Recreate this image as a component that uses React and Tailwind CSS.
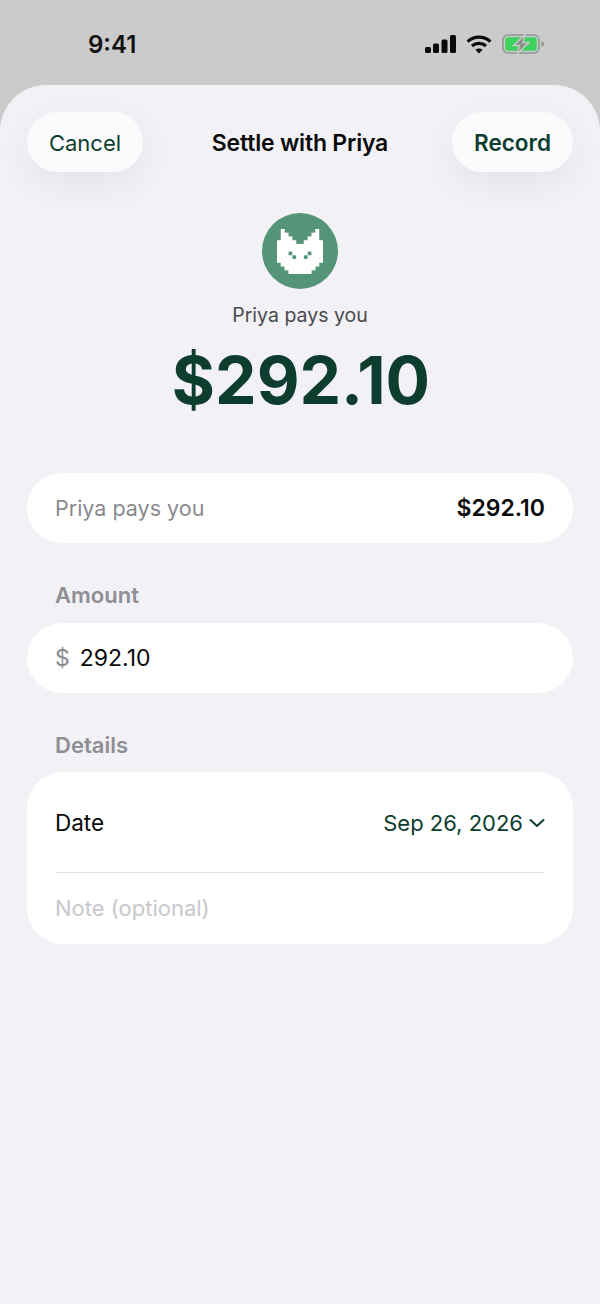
const CAT = [
  '.#........#.',
  '.##......##.',
  '.###....###.',
  '#####..#####',
  '############',
  '############',
  '###.####.###',
  '####.##.####',
  '############',
  '.##########.',
  '..########..',
  '...######...',
];

// all cells go in one path so no seams show between them
const CAT_PATH = CAT.flatMap((row, y) =>
  [...row].map((c, x) => (c === '#' ? `M${x} ${y}h1v1h-1z` : ''))
).join('');

const StatusBar = () => (
  <div className="flex h-[85px] items-start justify-between pl-[88px] pr-[55px] pt-[30px]">
    <span className="text-[24px] font-semibold leading-[30px] text-[#111]">9:41</span>
    <div className="flex items-center gap-[10px] pt-[4px]">
      <svg width="31" height="18" viewBox="0 0 31 18" fill="#0a0a0a">
        <rect x="0" y="12" width="6" height="6" rx="1.5" />
        <rect x="8" y="8.5" width="6" height="9.5" rx="1.5" />
        <rect x="16.5" y="4.5" width="6" height="13.5" rx="1.5" />
        <rect x="25" y="0" width="6" height="18" rx="1.5" />
      </svg>
      <svg width="26" height="19" viewBox="0 0 26 19" fill="none" stroke="#0a0a0a" strokeWidth="3.2">
        <path d="M1.6 6.6C8 .6 18 .6 24.4 6.6" />
        <path d="M6 11c3.8-3.4 10.2-3.4 14 0" />
        <path d="M13 18.6l-3.6-3.9c2-1.6 5.2-1.6 7.2 0z" fill="#0a0a0a" stroke="none" />
      </svg>
      <svg width="43" height="20" viewBox="0 0 43 20" fill="none">
        <rect x="1" y="1" width="36" height="18" rx="5" stroke="#8f9a90" strokeWidth="1.6" />
        <rect x="3.2" y="3.2" width="31.6" height="13.6" rx="3" fill="#3ed25f" />
        <path d="M39.5 7v6c1.6-.4 2.5-1.6 2.5-3s-.9-2.6-2.5-3z" fill="#8f9a90" />
        <path d="M23 0.5L11.5 11.5h6l-2 8L27 8.5h-6z" fill="#8a928b" stroke="#cbcbcb" strokeWidth="1.4" />
      </svg>
    </div>
  </div>
);

const Avatar = () => (
  <div className="flex h-[76px] w-[76px] items-center justify-center rounded-full bg-[#549478]">
    <svg width="46" height="45" viewBox="0 0 12 12" fill="#fff" preserveAspectRatio="none">
      <path d={CAT_PATH} stroke="#fff" strokeWidth="0.04" />
    </svg>
  </div>
);

const SectionLabel = ({ children, className }) => (
  <p className={`px-[28px] text-[22px] font-semibold leading-[28px] text-[#8e8e93] ${className}`}>{children}</p>
);

export default function App() {
  return (
    <div className="flex h-[1304px] w-[600px] flex-col overflow-hidden bg-[#cbcbcb] font-['Inter',sans-serif]">
      <StatusBar />
      <div className="flex-1 rounded-t-[46px] bg-[#f1f1f6] px-[27px] pt-[27px]">
        <div className="grid grid-cols-[1fr_auto_1fr] items-center">
          <button className="flex h-[60px] w-[116px] items-center justify-center justify-self-start rounded-full bg-[#fbfbfd] pt-[2px] text-[22px] text-[#0d3d2e] shadow-[0_12px_36px_rgba(0,0,0,0.06)]">
            Cancel
          </button>
          <span className="pt-[2px] text-[23px] font-semibold tracking-[-0.2px] text-[#0a0a0a]">Settle with Priya</span>
          <button className="flex h-[60px] w-[121px] items-center justify-center justify-self-end rounded-full bg-[#fbfbfd] pt-[2px] text-[22.5px] font-semibold text-[#0d3d2e] shadow-[0_12px_36px_rgba(0,0,0,0.06)]">
            Record
          </button>
        </div>

        <div className="flex flex-col items-center pt-[41px]">
          <Avatar />
          <p className="mt-[12px] text-[19.5px] leading-[28px] text-[#4a4a4e]">Priya pays you</p>
          <p className="mt-[13px] pl-[2px] text-[66px] font-bold leading-[76px] text-[#0d3d2e]">$292.10</p>
        </div>

        <div className="mt-[55px] flex h-[70px] items-center justify-between rounded-[36px] bg-white px-[28px]">
          <span className="text-[21.5px] text-[#8a8a8e]">Priya pays you</span>
          <span className="text-[23px] font-semibold text-[#0a0a0a]">$292.10</span>
        </div>

        <SectionLabel className="mt-[38px]">Amount</SectionLabel>
        <div className="mt-[14px] flex h-[70px] items-center gap-[10px] rounded-[36px] bg-white px-[28px] pt-[1px]">
          <span className="text-[23px] text-[#8a8a8e]">$</span>
          <span className="text-[23px] text-[#0a0a0a]">292.10</span>
        </div>

        <SectionLabel className="mt-[38px]">Details</SectionLabel>
        <div className="mt-[13px] rounded-[36px] bg-white px-[28px]">
          <div className="flex h-[101px] items-center justify-between border-b border-[#e3e3e6] pt-[2px]">
            <span className="text-[22.5px] text-[#0a0a0a]">Date</span>
            <div className="flex items-center gap-[6px] text-[#0d3d2e]">
              <span className="text-[22px]">Sep 26, 2026</span>
              <svg width="16" height="10" viewBox="0 0 16 10" fill="none" stroke="#0d3d2e" strokeWidth="2" strokeLinecap="round" strokeLinejoin="round">
                <path d="M1.5 2l6.5 6 6.5-6" />
              </svg>
            </div>
          </div>
          <div className="flex h-[71px] items-center">
            <span className="text-[22px] text-[#c7c7cc]">Note (optional)</span>
          </div>
        </div>
      </div>
    </div>
  );
}
